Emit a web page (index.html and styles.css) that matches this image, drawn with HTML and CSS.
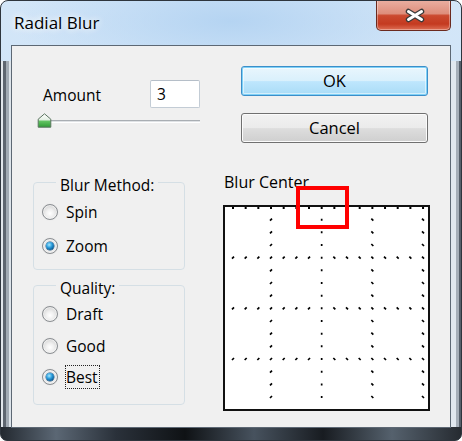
FILE: index.html
```html
<!DOCTYPE html>
<html>
<head>
<meta charset="utf-8">
<title>Radial Blur</title>
<link rel="stylesheet" href="styles.css">
</head>
<body>
<div class="window">
  <div class="titlebar">
    <span class="title">Radial Blur</span>
    <div class="close">
      <svg width="20" height="15" viewBox="0 0 20 15">
        <path d="M3.5 3.5 L16.5 11.5 M16.5 3.5 L3.5 11.5" stroke="#3a3a3a" stroke-width="5.5" stroke-linecap="round" fill="none"/>
        <path d="M3.5 3.5 L16.5 11.5 M16.5 3.5 L3.5 11.5" stroke="#ffffff" stroke-width="3" stroke-linecap="round" fill="none"/>
      </svg>
    </div>
  </div>
  <div class="client">
    <div class="col-left">
      <div class="amount-row">
        <span class="label">Amount</span>
        <div class="field">3</div>
      </div>
      <div class="slider">
        <div class="track"></div>
        <svg class="thumb" width="15" height="15" viewBox="0 0 15 15">
          <defs>
            <linearGradient id="tg" x1="0" y1="0" x2="0" y2="1">
              <stop offset="0" stop-color="#ffffff"/>
              <stop offset="0.45" stop-color="#e3efe3"/>
              <stop offset="0.55" stop-color="#63c463"/>
              <stop offset="1" stop-color="#2f9b35"/>
            </linearGradient>
          </defs>
          <path d="M7.5 0.8 L13.8 6.2 V14.2 H1.2 V6.2 Z" fill="url(#tg)" stroke="#5b7560" stroke-width="1"/>
        </svg>
      </div>
      <fieldset class="group g1">
        <legend>Blur Method:</legend>
        <div class="radio"><span class="dot"></span><span class="rlabel">Spin</span></div>
        <div class="radio checked"><span class="dot"></span><span class="rlabel">Zoom</span></div>
      </fieldset>
      <fieldset class="group g2">
        <legend>Quality:</legend>
        <div class="radio"><span class="dot"></span><span class="rlabel">Draft</span></div>
        <div class="radio"><span class="dot"></span><span class="rlabel">Good</span></div>
        <div class="radio checked"><span class="dot"></span><span class="rlabel focus">Best</span></div>
      </fieldset>
    </div>
    <div class="col-right">
      <button class="btn ok">OK</button>
      <button class="btn cancel">Cancel</button>
      <div class="center-wrap">
        <div class="center-label">Blur Center</div>
        <div class="preview">
          <svg width="207" height="206" viewBox="0 0 207 206">
            <rect x="1" y="1" width="205" height="204" fill="#ffffff" stroke="#111111" stroke-width="2"/>
            <g fill="none" stroke="#000000" stroke-width="1.7">
              <path d="M9 53.67l2-2m10.67 2l2-2m10.67 2l2-2m10.67 2l2-2m10.67 2l2-2m10.67 2l2-2m10.67 2l2-2"/>
              <path d="M9 104.33l2-2m10.67 2l2-2m10.67 2l2-2m10.67 2l2-2m10.67 2l2-2m10.67 2l2-2m10.67 2l2-2"/>
              <path d="M9 155l2-2m10.67 2l2-2m10.67 2l2-2m10.67 2l2-2m10.67 2l2-2m10.67 2l2-2m10.67 2l2-2"/>
              <path d="M110.33 51.67l2 2m10.67-2l2 2m10.67-2l2 2m10.67-2l2 2m10.67-2l2 2m10.67-2l2 2m10.67-2l2 2m10.67-2l2 2"/>
              <path d="M110.33 102.33l2 2m10.67-2l2 2m10.67-2l2 2m10.67-2l2 2m10.67-2l2 2m10.67-2l2 2m10.67-2l2 2m10.67-2l2 2"/>
              <path d="M110.33 153l2 2m10.67-2l2 2m10.67-2l2 2m10.67-2l2 2m10.67-2l2 2m10.67-2l2 2m10.67-2l2 2m10.67-2l2 2"/>
              <path d="M47 15.67l2-2m-2 14.67l2-2m-2 14.67l2-2m-2 27.33l2-2m-2 14.67l2-2m-2 14.67l2-2m-2 27.33l2-2m-2 14.67l2-2m-2 14.67l2-2m-2 27.33l2-2m-2 14.67l2-2m-2 14.67l2-2"/>
              <path d="M148.33 13.67l2 2m-2 10.67l2 2m-2 10.67l2 2m-2 23.33l2 2m-2 10.67l2 2m-2 10.67l2 2m-2 23.33l2 2m-2 10.67l2 2m-2 10.67l2 2m-2 23.33l2 2m-2 10.67l2 2m-2 10.67l2 2"/>
              <path d="M199 13.67l2 2m-2 10.67l2 2m-2 10.67l2 2m-2 23.33l2 2m-2 10.67l2 2m-2 10.67l2 2m-2 23.33l2 2m-2 10.67l2 2m-2 10.67l2 2m-2 23.33l2 2m-2 10.67l2 2m-2 10.67l2 2"/>
              <path d="M98.67 13.67v2m0 10.67v2m0 10.67v2m0 10.67v2m0 10.67v2m0 10.67v2m0 10.67v2m0 10.67v2m0 10.67v2m0 10.67v2m0 10.67v2m0 10.67v2m0 10.67v2m0 10.67v2m0 10.67v2"/>
              <path stroke-width="2" d="M9 3h2m10.67 0h2m10.67 0h2m10.67 0h2m10.67 0h2m10.67 0h2m10.67 0h2m10.67 0h2m10.67 0h2m10.67 0h2m10.67 0h2m10.67 0h2m10.67 0h2m10.67 0h2m10.67 0h2m10.67 0h2"/>
            </g>
          </svg>
        </div>
        <div class="marker"></div>
      </div>
    </div>
  </div>
</div>
</body>
</html>
```

FILE: styles.css
```css
html, body {
  margin: 0;
  padding: 0;
  background: #ffffff;
}

body {
  font-family: "Open Sans", "Noto Sans", sans-serif;
  color: #000000;
}

.window {
  width: 462px;
  height: 441px;
  box-sizing: border-box;
  border: 1px solid #2e353d;
  border-radius: 8px 8px 7px 7px;
  padding: 0 10px 12px 10px;
  display: flex;
  flex-direction: column;
  overflow: hidden;
  background:
    linear-gradient(to right, #232930 0%, #5b6774 12%, #2a313a 25%, #0f1215 40%, #47525e 55%, #181c21 70%, #55616d 85%, #262b31 100%) left bottom / 100% 13px no-repeat,
    linear-gradient(to right, #e2e7ec 0 2px, #5e6670 2px 5px, #a2abb4 5px 8px, #dde4ea 8px 10px) left 0 top 60px / 10px 100% no-repeat,
    linear-gradient(to right, #e1e8ef 0 5px, #a6afb9 5px 8px, #56606b 8px 10px) right 0 top 60px / 10px 100% no-repeat,
    radial-gradient(ellipse 220px 60px at 230px 20px, #b5d4f2, rgba(181, 212, 242, 0)),
    linear-gradient(#d3e6f8, #c8dff5);
}

.titlebar {
  height: 44px;
  flex-shrink: 0;
  display: flex;
  align-items: flex-start;
}

.title {
  padding: 12px 0 0 3px;
  font-size: 17px;
  line-height: 20px;
  color: #000000;
  text-shadow: 0 0 6px #ffffff, 0 0 10px rgba(255, 255, 255, 0.8);
}

.close {
  margin-left: auto;
  margin-top: -1px;
  width: 75px;
  height: 31px;
  box-sizing: border-box;
  border: 1px solid #6b2a1f;
  border-top: none;
  border-radius: 0 0 5px 5px;
  background: linear-gradient(#eab0a2 0%, #de8e7c 45%, #cb4a30 52%, #c43a20 80%, #de6f55 100%);
  box-shadow: inset 0 0 0 1px rgba(255, 255, 255, 0.35);
  display: flex;
  align-items: center;
  justify-content: center;
  padding-left: 3px;
}

.close svg {
  display: block;
}

.client {
  flex: 1;
  border: 1px solid #5d6874;
  background: #f0f0f0;
  display: grid;
  grid-template-columns: 167px 207px;
  column-gap: 23px;
  padding-left: 21px;
  align-items: start;
}

.col-left {
  display: flex;
  flex-direction: column;
}

.amount-row {
  margin-top: 34px;
  height: 28px;
  display: flex;
  align-items: center;
}

.label {
  padding: 2px 0 0 10px;
  font-size: 15.5px;
  line-height: 18px;
}

.field {
  margin-left: auto;
  width: 50px;
  height: 28px;
  box-sizing: border-box;
  border: 1px solid #c3ccd5;
  border-top-color: #b5bec8;
  border-radius: 2px;
  background: #ffffff;
  padding-left: 6px;
  font-size: 15.5px;
  line-height: 26px;
}

.slider {
  position: relative;
  margin-top: 5px;
  margin-left: 5px;
  height: 14px;
}

.track {
  margin-top: 7px;
  height: 3px;
  background: linear-gradient(#a9aeb3 0 1px, #dfe2e5 1px 2px, #ffffff 2px);
}

.thumb {
  position: absolute;
  left: -1px;
  top: 0;
  display: block;
}

.group {
  margin: 0;
  width: 152px;
  min-width: 0;
  box-sizing: border-box;
  border: 1px solid #d5dfe5;
  border-radius: 4px;
}

.group legend {
  margin-left: 14px;
  padding: 6px 4px 0;
  font-size: 15.5px;
  line-height: 18px;
}

.g1 {
  margin-top: 43px;
  padding: 6px 0 11px 8px;
}

.g2 {
  margin-top: 3px;
  padding: 5px 0 15px 8px;
}

.radio {
  height: 24px;
  display: flex;
  align-items: center;
}

.g1 .radio + .radio {
  margin-top: 10px;
}

.g2 .radio + .radio {
  margin-top: 7.5px;
}

.dot {
  width: 16px;
  height: 16px;
  box-sizing: border-box;
  border-radius: 50%;
  border: 1px solid #8a8e92;
  background: radial-gradient(circle at 50% 60%, #ffffff 0, #f0f0f0 35%, #d9d9d9 70%, #c4c4c4 100%);
  box-shadow: inset 0 0 0 1px rgba(255, 255, 255, 0.55), 0 0 1px rgba(0, 0, 0, 0.15);
  display: flex;
  align-items: center;
  justify-content: center;
  flex-shrink: 0;
}

.checked .dot {
  background: radial-gradient(circle at 50% 50%, #ffffff 0, #f4f4f4 45%, #d4d4d4 80%, #c0c0c0 100%);
}

.checked .dot::after {
  content: "";
  width: 8px;
  height: 8px;
  border-radius: 50%;
  background: radial-gradient(circle at 40% 35%, #a6e9ff 0, #2b9cdb 40%, #0d5a93 75%, #0a3f6b 100%);
  box-shadow: 0 0 0 0.5px #1c4f77;
}

.rlabel {
  margin-left: 7px;
  padding: 0 2px 0 1px;
  font-size: 15.5px;
  line-height: 24px;
  height: 24px;
  box-sizing: border-box;
}

.rlabel.focus {
  outline: 1px dotted #222222;
  outline-offset: -1px;
}

.col-right {
  display: flex;
  flex-direction: column;
}

.btn {
  display: block;
  width: 187px;
  height: 30px;
  margin-left: 18px;
  padding: 0;
  box-sizing: border-box;
  border-radius: 3px;
  font-family: "Open Sans", "Noto Sans", sans-serif;
  font-size: 16.5px;
  line-height: 26px;
  color: #000000;
}

.ok {
  margin-top: 20px;
  border: 1px solid #3c8ec9;
  background: linear-gradient(#e9f6fd 0%, #d9f0fc 50%, #bee6fd 52%, #a9dcf6 100%);
  box-shadow: inset 0 0 0 1px #7fd1f7, inset 0 0 0 2px rgba(255, 255, 255, 0.5);
}

.cancel {
  margin-top: 17px;
  border: 1px solid #707070;
  background: linear-gradient(#f2f2f2 0%, #ebebeb 50%, #dddddd 52%, #cfcfcf 100%);
  box-shadow: inset 0 0 0 1px #fbfbfb;
}

.center-wrap {
  position: relative;
  margin-top: 29px;
}

.center-label {
  padding-left: 1px;
  font-size: 16px;
  line-height: 20px;
}

.preview {
  margin-top: 13px;
  width: 207px;
  height: 206px;
}

.preview svg {
  display: block;
}

.marker {
  position: absolute;
  left: 73px;
  top: 14px;
  width: 53px;
  height: 43px;
  box-sizing: border-box;
  border: 4px solid #ff0000;
}
```
